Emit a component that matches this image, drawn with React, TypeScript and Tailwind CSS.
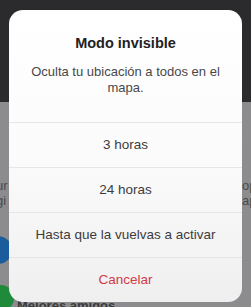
import React from "react";

export default function App() {
  const font = { fontFamily: '"Liberation Sans", Arial, sans-serif' };
  return (
    <div className="relative w-[251px] h-[307px] overflow-hidden" style={font}>
      <div className="flex flex-col h-full">
        <div className="h-[102px] bg-[#2b2b2d]" />
        <div className="relative flex-1 bg-[#8c8c8e]">
          <div className="absolute left-[-4px] top-[76px] text-[13px] leading-[15px] text-[#4a4a4c]">
            <div>ur</div>
            <div>gi</div>
          </div>
          <div className="absolute left-[242px] top-[76px] text-[13px] leading-[15px] text-[#4a4a4c]">
            <div>op</div>
            <div>ap</div>
          </div>
          <div className="absolute left-[-16px] top-[134px] w-[28px] h-[28px] rounded-full bg-[#1b5c9c]" />
          <div className="absolute left-[-12px] top-[183px] w-[26px] h-[26px] rounded-full bg-[#1f8a3a]" />
          <div className="absolute left-[17px] top-[194px] text-[13px] font-bold text-[#3a3a3c]">Mejores amigos</div>
        </div>
      </div>
      <div className="absolute left-[9px] top-[10px] w-[233px] h-[292px] rounded-[14px] overflow-hidden bg-gradient-to-b from-[#ffffff] via-[#fbfbfb] to-[#efeff0] flex flex-col">
        <div className="pt-[24px] pb-[26px] px-4 flex flex-col items-center gap-[12px] text-center">
          <div className="text-[14.5px] leading-[18px] font-bold text-[#222224]">Modo invisible</div>
          <div className="text-[13px] leading-[16px] text-[#48484a]">
            Oculta tu ubicación a todos en el
            <br />
            mapa.
          </div>
        </div>
        {["3 horas", "24 horas", "Hasta que la vuelvas a activar"].map((t) => (
          <div
            key={t}
            className="h-[45px] border-t border-[#e6e6e8] flex items-center justify-center text-[13.5px] text-[#3c3c3e]"
          >
            {t}
          </div>
        ))}
        <div className="h-[45px] border-t border-[#e3e3e5] flex items-center justify-center text-[13.5px] text-[#d23a48]">
          Cancelar
        </div>
      </div>
    </div>
  );
}
